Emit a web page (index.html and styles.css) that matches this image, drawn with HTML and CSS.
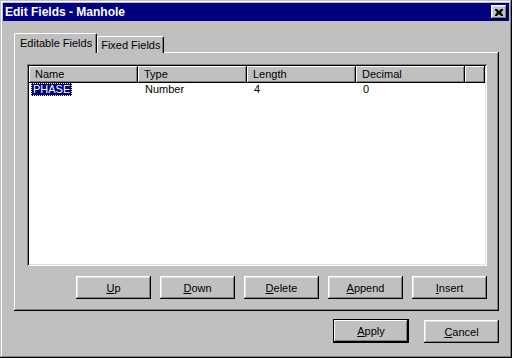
FILE: index.html
```html
<!DOCTYPE html>
<html lang="en">
<head>
    <meta charset="UTF-8">
    <title>Edit Fields - Manhole</title>
    <link rel="stylesheet" href="styles.css">
</head>
<body>
    <div class="window">
        <div class="titlebar">
            <span class="title">Edit Fields - Manhole</span>
            <button class="close-btn">
                <svg width="8" height="7" viewBox="0 0 8 7">
                    <path d="M0 0h2l2 2 2-2h2v1L6 3.5 8 6v1H6L4 5 2 7H0V6l2-2.5L0 1z" fill="#000"/>
                </svg>
            </button>
        </div>
        <div class="client">
            <div class="tabs">
                <div class="tab active">Editable Fields</div>
                <div class="tab">Fixed Fields</div>
            </div>
            <div class="panel">
                <div class="listview">
                    <div class="lv-header">
                        <div class="hcell">Name</div>
                        <div class="hcell">Type</div>
                        <div class="hcell">Length</div>
                        <div class="hcell">Decimal</div>
                        <div class="hcell filler"></div>
                    </div>
                    <div class="lv-row">
                        <div class="cell first"><span class="selected">PHASE</span></div>
                        <div class="cell">Number</div>
                        <div class="cell">4</div>
                        <div class="cell">0</div>
                    </div>
                </div>
                <div class="panel-buttons">
                    <button class="btn"><u>U</u>p</button>
                    <button class="btn"><u>D</u>own</button>
                    <button class="btn"><u>D</u>elete</button>
                    <button class="btn"><u>A</u>ppend</button>
                    <button class="btn"><u>I</u>nsert</button>
                </div>
            </div>
            <div class="dialog-buttons">
                <button class="btn default"><u>A</u>pply</button>
                <button class="btn"><u>C</u>ancel</button>
            </div>
        </div>
    </div>
</body>
</html>
```

FILE: styles.css
```css
body {
    margin: 0;
    background: #c0c0c0;
    font-family: "Liberation Sans", Arial, sans-serif;
    font-size: 11px;
    color: #000;
}
.window {
    width: 512px;
    height: 358px;
    box-sizing: border-box;
    padding: 3px;
    background: #c0c0c0;
    box-shadow: inset -1px -1px #000, inset 1px 1px #c0c0c0, inset -2px -2px #808080, inset 2px 2px #fff;
}
.titlebar {
    height: 18px;
    background: #000080;
    display: flex;
    align-items: center;
    justify-content: space-between;
    padding: 0 2px;
}
.title {
    color: #fff;
    font-weight: bold;
    font-size: 12px;
}
.close-btn {
    width: 16px;
    height: 14px;
    padding: 0;
    border: none;
    background: #c0c0c0;
    display: flex;
    align-items: center;
    justify-content: center;
    box-shadow: inset -1px -1px #000, inset 1px 1px #fff, inset -2px -2px #808080, inset 2px 2px #dfdfdf;
}
.client {
    padding: 12px 10px 0 11px;
}
.tabs {
    display: flex;
    align-items: flex-end;
    height: 20px;
    margin-bottom: -1px;
}
.tab {
    height: 17px;
    box-sizing: border-box;
    padding: 1px 3px 0 3px;
    border-top: 1px solid #fff;
    border-left: 1px solid #fff;
    border-right: 1px solid #000;
    border-radius: 2px 2px 0 0;
    box-shadow: inset -1px 0 #808080;
    background: #c0c0c0;
    line-height: 14px;
}
.tab.active {
    height: 20px;
    padding: 2px 4px 0 5px;
    position: relative;
    z-index: 1;
}
.panel {
    width: 485px;
    height: 259px;
    box-sizing: border-box;
    padding: 12px 12px 0 13px;
    box-shadow: inset -1px -1px #000, inset 1px 1px #fff, inset -2px -2px #808080;
}
.listview {
    width: 460px;
    height: 202px;
    box-sizing: border-box;
    padding: 2px;
    background: #fff;
    box-shadow: inset 1px 1px #808080, inset -1px -1px #fff, inset 2px 2px #000, inset -2px -2px #dfdfdf;
}
.lv-header {
    display: flex;
    height: 17px;
}
.hcell {
    width: 109px;
    box-sizing: border-box;
    padding-left: 6px;
    line-height: 16px;
    background: #c0c0c0;
    box-shadow: inset -1px -1px #000, inset 1px 1px #fff, inset -2px -2px #808080;
}
.hcell.filler {
    flex: 1;
}
.lv-row {
    display: flex;
    height: 14px;
    line-height: 13px;
}
.cell {
    width: 109px;
    box-sizing: border-box;
    padding-left: 7px;
}
.cell.first {
    padding-left: 2px;
}
.selected {
    display: inline-block;
    padding: 0 2px;
    background: #000080;
    color: #fff;
    outline: 1px dotted #ffff80;
    outline-offset: -1px;
}
.panel-buttons {
    display: flex;
    justify-content: flex-end;
    gap: 9px;
    margin-top: 10px;
}
.btn {
    width: 75px;
    height: 23px;
    padding: 0;
    border: none;
    background: #c0c0c0;
    font-family: "Liberation Sans", Arial, sans-serif;
    font-size: 11px;
    color: #000;
    box-shadow: inset -1px -1px #000, inset 1px 1px #fff, inset -2px -2px #808080, inset 2px 2px #dfdfdf;
}
.btn.default {
    width: 76px;
    height: 24px;
    border: 1px solid #000;
    box-shadow: inset -1px -1px #000, inset 1px 1px #fff, inset -2px -2px #808080;
}
.dialog-buttons {
    display: flex;
    justify-content: flex-end;
    align-items: flex-end;
    gap: 15px;
    width: 485px;
    margin-top: 8px;
}
```
